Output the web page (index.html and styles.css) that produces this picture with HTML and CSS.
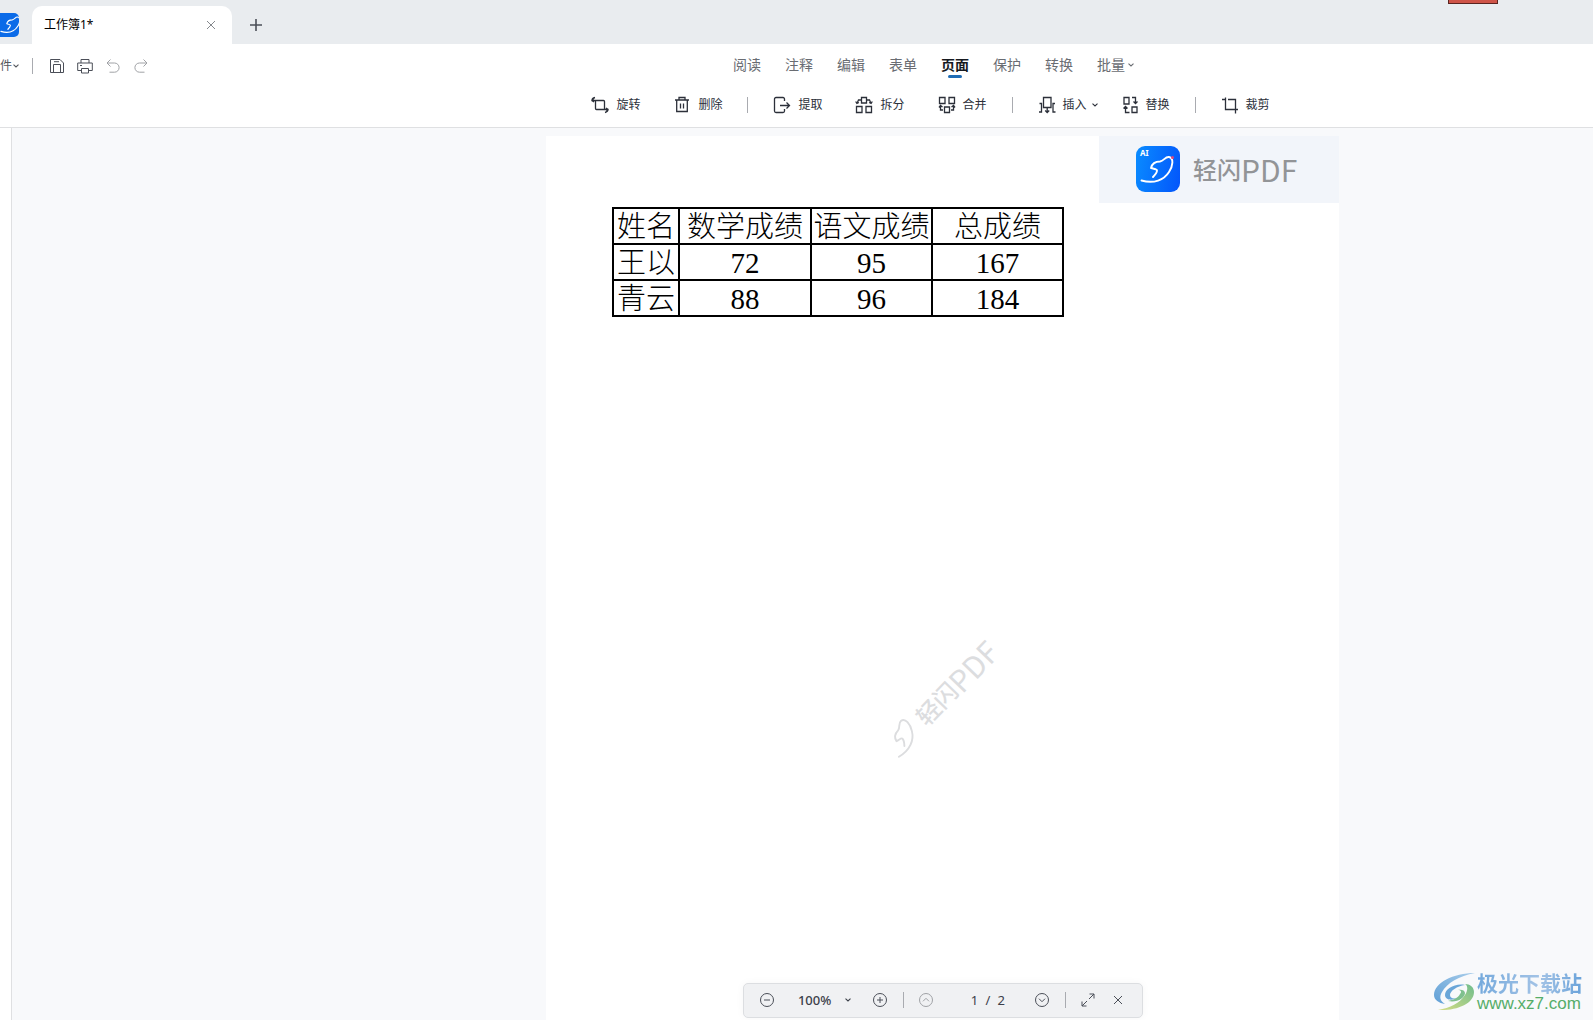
FILE: index.html
```html
<!DOCTYPE html>
<html lang="zh-CN">
<head>
<meta charset="utf-8">
<title>工作簿1*</title>
<link rel="stylesheet" href="styles.css">
</head>
<body>
<svg class="defs" aria-hidden="true">
  <symbol id="bird" viewBox="0 0 36 30">
    <path d="M1.500 25.500C14 29 24 25 29 17C33 11 34 3 29 2C25 1.500 24 6 20 6.500C14 6.500 12 9 11 13C14 14 17 14 17 15.500C17 18 15 20 13 22" fill="none" stroke="currentColor" stroke-width="1.900" stroke-linecap="round" stroke-linejoin="round"/>
  </symbol>
  <symbol id="chev" viewBox="0 0 8 8">
    <path d="M1.500 2.700l2.500 2.300l2.500-2.300" fill="none" stroke="currentColor" stroke-width="1.100"/>
  </symbol>
</svg>

<header class="titlebar">
  <div class="app-icon"><svg width="22" height="20"><use href="#bird"/></svg></div>
  <div class="doc-tab">
    <span>工作簿1*</span>
    <button class="icon-btn tab-close" aria-label="关闭标签"><svg width="12" height="12" viewBox="0 0 12 12"><path d="M2 2l8 8M10 2l-8 8"/></svg></button>
  </div>
  <button class="icon-btn new-tab" aria-label="新建标签"><svg width="14" height="14" viewBox="0 0 14 14"><path d="M7 1v12M1 7h12"/></svg></button>
  <div class="red-chip"></div>
</header>

<div class="ribbon">
  <div class="menu-row">
    <div class="quick">
      <button class="file-btn"><span>件</span><svg width="8" height="8"><use href="#chev"/></svg></button>
      <i class="sep"></i>
      <button class="icon-btn" aria-label="保存"><svg width="16" height="16" viewBox="0 0 16 16"><path d="M1.500 1.500h9.500l3.500 3.500v9.500h-13zM4.500 14v-7.500h7v7.500M5 3.700h5"/></svg></button>
      <button class="icon-btn" aria-label="打印"><svg width="16" height="16" viewBox="0 0 16 16"><path d="M4 5v-3.500h8v3.500M4 12.500h-3.300v-7.500h14.600v7.500h-3.300M4.500 10.500h7v4.500h-7zM3 7.500h2"/></svg></button>
      <button class="icon-btn faint" aria-label="撤销"><svg width="16" height="16" viewBox="0 0 16 16"><path d="M5.500 1.500l-3.500 3.500l3.500 3.500M2 5h7.500a4.600 4.600 0 0 1 0 9.200h-5"/></svg></button>
      <button class="icon-btn faint" aria-label="重做"><svg width="16" height="16" viewBox="0 0 16 16"><path d="M10.500 1.500l3.500 3.500l-3.500 3.500M14 5h-7.500a4.600 4.600 0 0 0 0 9.200h5"/></svg></button>
    </div>
    <nav class="menu">
      <button>阅读</button>
      <button>注释</button>
      <button>编辑</button>
      <button>表单</button>
      <button class="active" aria-current="page">页面</button>
      <button>保护</button>
      <button>转换</button>
      <button>批量<svg width="8" height="8"><use href="#chev"/></svg></button>
    </nav>
  </div>

  <div class="tools">
    <button><svg width="18" height="18" viewBox="0 0 18 18"><path d="M4.500 4.500h8a1 1 0 0 1 1 1v8h-8a1 1 0 0 1-1-1zM4.500 4.500h-3.500c0-1.500 1-2.500 3-3M13.500 13.500h3.500c0 1.500-1 2.500-3 3M2.500 2.500l-1.500 2l2 1.500M15.500 15.500l1.500-2l-2-1.500"/></svg>旋转</button>
    <button><svg width="18" height="18" viewBox="0 0 18 18"><path d="M2 4h14M6 4v-2.500h6v2.500M3.700 4v11.500h10.600v-11.500M7.500 7.500v5M10.500 7.500v5"/></svg>删除</button>
    <i class="sep"></i>
    <button><svg width="18" height="18" viewBox="0 0 18 18"><path d="M11.500 5v-2a1.500 1.500 0 0 0-1.500-1.500h-7a1.500 1.500 0 0 0-1.500 1.500v12a1.500 1.500 0 0 0 1.500 1.500h7a1.500 1.500 0 0 0 1.500-1.500v-2M7 9.500h9.500M13.500 6.500l3 3l-3 3"/></svg>提取</button>
    <button><svg width="18" height="18" viewBox="0 0 18 18"><path d="M6.500 1.500h5v5.500h-5zM1.500 10.500h5.500v6h-5.500zM11 10.500h5.500v6h-5.500zM6 4h-2.500l-1.500 3.500M.7 5.500l1.200 2l2-1M12 4h2.500l1.500 3.500M17.300 5.500l-1.200 2l-2-1"/></svg>拆分</button>
    <button><svg width="18" height="18" viewBox="0 0 18 18"><path d="M1.500 1.500h5.500v6h-5.500zM11 1.500h5.500v6h-5.500zM6.500 11h5v5.500h-5zM2.500 9.500v4.500h2.500M1 11.500l1.500-2l2 1.500M15.500 9.500v4.500h-2.500M17 11.500l-1.500-2l-2 1.500"/></svg>合并</button>
    <i class="sep"></i>
    <button><svg width="18" height="18" viewBox="0 0 18 18"><path d="M5.500 1.500h7.500v10h-7.500zM9.200 11.500v5M7.200 14.500l2 2l2-2M1.500 7.500h2v8.500h-2.500M17 7.500h-2v8.500h2.500"/></svg>插入<svg class="drop" width="8" height="8"><use href="#chev"/></svg></button>
    <button><svg width="18" height="18" viewBox="0 0 18 18"><path d="M3 1.500h5v6.500h-5zM11 11h5v5.500h-5zM11 1.500h3.500v6M12.500 5.500l2 2l2-2M8.500 16.500h-4v-6M2.500 12.500l2-2l2 2"/></svg>替换</button>
    <i class="sep"></i>
    <button><svg width="18" height="18" viewBox="0 0 18 18"><path d="M1 3.500h3.500M4.500 1.500v12h12.500M7 3.500h7.500v14"/></svg>裁剪</button>
  </div>
</div>

<main class="workspace">
  <aside class="rail"></aside>
  <section class="canvas">
    <article class="sheet">
      <div class="brand">
        <div class="brand-icon"><b>AI</b><svg width="36" height="30"><use href="#bird"/></svg><i></i></div>
        <div class="brand-name">轻闪<span>PDF</span></div>
      </div>
      <table class="grades">
        <colgroup><col class="c-name"><col class="c-math"><col class="c-lang"><col class="c-total"></colgroup>
        <tr><th>姓名</th><th>数学成绩</th><th>语文成绩</th><th>总成绩</th></tr>
        <tr><td>王以</td><td>72</td><td>95</td><td>167</td></tr>
        <tr><td>青云</td><td>88</td><td>96</td><td>184</td></tr>
      </table>
      <div class="watermark">
        <svg width="36" height="30"><use href="#bird"/></svg>
        <div class="brand-name">轻闪<span>PDF</span></div>
      </div>
    </article>
  </section>

  <div class="dock">
    <div class="pager">
      <button class="icon-btn" aria-label="缩小"><svg width="16" height="16" viewBox="0 0 16 16"><circle cx="8" cy="8" r="6.500"/><path d="M5 8h6"/></svg></button>
      <div class="zoom">
        <select aria-label="缩放"><option>100%</option><option>150%</option></select>
        <svg width="8" height="8"><use href="#chev"/></svg>
      </div>
      <button class="icon-btn" aria-label="放大"><svg width="16" height="16" viewBox="0 0 16 16"><circle cx="8" cy="8" r="6.500"/><path d="M5 8h6M8 5v6"/></svg></button>
      <i class="sep"></i>
      <button class="icon-btn faint" aria-label="上一页"><svg width="16" height="16" viewBox="0 0 16 16"><circle cx="8" cy="8" r="6.500"/><path d="M5 9.300l3-3l3 3"/></svg></button>
      <div class="count"><input type="text" value="1" aria-label="页码"><span>/</span><span>2</span></div>
      <button class="icon-btn" aria-label="下一页"><svg width="16" height="16" viewBox="0 0 16 16"><circle cx="8" cy="8" r="6.500"/><path d="M5 6.700l3 3l3-3"/></svg></button>
      <i class="sep"></i>
      <button class="icon-btn" aria-label="全屏"><svg width="16" height="16" viewBox="0 0 16 16"><path d="M9 7l5-5M9.500 2h4.500v4.500M7 9l-5 5M2 9.500v4.500h4.500"/></svg></button>
      <button class="icon-btn" aria-label="关闭"><svg width="16" height="16" viewBox="0 0 16 16"><path d="M4 4l8 8M12 4l-8 8"/></svg></button>
    </div>
  </div>

  <div class="site-mark">
    <svg width="44" height="40" viewBox="0 0 44 40">
      <defs>
        <linearGradient id="blue" x1="1" y1="0" x2="0" y2="1"><stop offset="0" stop-color="#a9cdea"/><stop offset="1" stop-color="#5f9fd6"/></linearGradient>
        <linearGradient id="green" x1="0" y1="1" x2="1" y2="0"><stop offset="0" stop-color="#d6dd84"/><stop offset="1" stop-color="#6fbd8d"/></linearGradient>
      </defs>
      <path d="M42 1C20 1 1 11 1 23c0 5 5 8 11 9c-5-3-6-7-3-12C14 11 26 4 42 1z" fill="url(#blue)"/>
      <path d="M32 13c-10-2-20 4-20 10c0 5 7 6 12 3c-4 1-7 0-7-3c0-4 7-9 15-10z" fill="#6aa6d8"/>
      <path d="M5 38c18 1 36-6 36-18c0-5-4-8-9-8c3 2 3 6 0 11c-5 8-15 13-27 15z" fill="url(#green)"/>
      <path d="M15 29c9 2 17-3 17-8c0-3-4-4-7-3c3 0 4 2 2 4c-2 4-7 6-12 7z" fill="#7fc08e"/>
    </svg>
    <div><p class="site-name">极光下载站</p><p class="site-url">www.xz7.com</p></div>
  </div>
</main>
</body>
</html>
```

FILE: styles.css
```css
* { box-sizing: border-box; }

body {
  margin: 0;
  height: 100vh;
  display: flex;
  flex-direction: column;
  overflow: hidden;
  background: #fff;
  color: #1f2430;
  font: 12px/16px "Noto Sans", "Noto Sans CJK SC", sans-serif;
}

button, input, select {
  margin: 0;
  padding: 0;
  border: 0;
  background: none;
  color: inherit;
  font: inherit;
}

button { display: flex; align-items: center; white-space: nowrap; }
svg { display: block; flex: none; }
button path, button circle { fill: none; stroke: currentColor; }
p { margin: 0; }
.defs { position: absolute; width: 0; height: 0; }

.sep { width: 1px; height: 16px; background: #a9abb0; }
.icon-btn { justify-content: center; color: #4b4f58; }
.icon-btn.faint { color: #a0a2a6; }

/* Title bar */
.titlebar {
  position: relative;
  flex: none;
  display: flex;
  align-items: center;
  height: 44px;
  padding-top: 6px;
  background: #e9ecef;
}
.app-icon {
  display: grid;
  place-items: center end;
  width: 19px;
  height: 24px;
  overflow: hidden;
  border-radius: 0 5px 5px 0;
  background: #0b6be8;
  color: #fff;
}
.doc-tab {
  display: flex;
  align-items: center;
  justify-content: space-between;
  width: 200px;
  height: 38px;
  margin: 0 17px 0 13px;
  padding: 0 15px 0 12px;
  border-radius: 10px 10px 0 0;
  background: #fff;
  color: #000;
}
.tab-close { color: #85888d; }
.new-tab path { stroke-width: 1.600; }
.red-chip {
  position: absolute;
  top: 0;
  right: 95px;
  width: 50px;
  height: 4px;
  border: solid #5a2420;
  border-width: 0 1px 1px;
  background: #cf5448;
}

/* Ribbon */
.ribbon { flex: none; border-bottom: 1px solid #dfe0e2; }
.menu-row { display: grid; height: 44px; padding-top: 4px; }
.quick, .menu { grid-area: 1 / 1; display: flex; align-items: center; height: 34px; }
.quick { justify-self: start; gap: 12px; height: 36px; }
.quick .sep { margin-right: 4px; }
.file-btn { color: #55585e; }
.menu { justify-self: center; gap: 24px; margin-left: 275px; font-size: 14px; color: #696c72; }
.menu button { height: 24px; gap: 2px; }
.menu .active {
  position: relative;
  color: #16191f;
  font-weight: 700;
}
.menu .active::after {
  content: "";
  position: absolute;
  left: 7px;
  bottom: -1px;
  width: 14px;
  height: 3px;
  border-radius: 2px;
  background: #1f6cb5;
}
.tools {
  display: flex;
  align-items: center;
  justify-content: center;
  gap: 17px;
  height: 39px;
  margin-left: 268px;
  padding-bottom: 5px;
}
.tools button { gap: 7px; padding: 0 8px; color: #2c303a; }
.tools path { stroke-width: 1.300; }
.tools .drop { margin: 0 -11px 0 -3px; }

/* Workspace */
.workspace { position: relative; flex: 1; display: flex; min-height: 0; background: #f8f9fb; }
.rail { width: 12px; border-right: 1px solid #dfe0e2; background: #fff; }
.canvas { flex: 1; display: flex; justify-content: center; padding: 8px 0 0 280px; }
.sheet { position: relative; width: 793px; background: #fff; }

.brand {
  display: flex;
  align-items: center;
  gap: 13px;
  width: 240px;
  height: 67px;
  margin-left: auto;
  padding: 0 0 2px 37px;
  background: #f2f5fa;
}
.brand-icon {
  position: relative;
  display: grid;
  place-items: end center;
  width: 44px;
  height: 46px;
  padding-bottom: 7px;
  border-radius: 9px;
  background: linear-gradient(100deg, #0a8cff, #0355fb);
  color: #fff;
}
.brand-icon b { position: absolute; left: 4px; top: 2px; font-size: 8px; line-height: 10px; }
.brand-icon i { position: absolute; right: 6px; top: 10px; width: 3px; height: 3px; border-radius: 2px; background: #e0457a; }
.brand-name {
  display: flex;
  align-items: center;
  font: 500 24px/32px "Noto Sans CJK SC", sans-serif;
  color: #929497;
}
.brand-name span { font-size: 30px; font-weight: 400; line-height: 30px; }

.grades {
  width: 452px;
  margin: 4px 0 0 66px;
  border-collapse: collapse;
  table-layout: fixed;
  color: #000;
  font: 29px/32px "Liberation Serif", "Noto Sans CJK SC", serif;
}
.grades th, .grades td {
  height: 36px;
  padding: 2px 0 0;
  border: 2px solid #000;
  font-weight: 300;
  text-align: center;
  white-space: nowrap;
}
.c-name { width: 66px; }
.c-math { width: 132px; }
.c-lang { width: 121px; }
.c-total { width: 131px; }

.watermark {
  position: absolute;
  left: 322px;
  top: 546px;
  display: flex;
  align-items: center;
  gap: 6px;
  color: #dcdddf;
  transform: rotate(-46deg);
}
.watermark .brand-name { color: inherit; }

/* Floating page controls */
.dock {
  position: absolute;
  left: 292px;
  right: 0;
  bottom: 2px;
  display: flex;
  justify-content: center;
  pointer-events: none;
}
.pager {
  display: flex;
  align-items: center;
  justify-content: space-between;
  width: 400px;
  height: 35px;
  padding: 0 15px 1px;
  border: 1px solid #dcdee1;
  border-radius: 5px;
  background: #f0f1f3;
  box-shadow: 0 0 8px #0000000a;
  color: #3c404a;
  font-size: 13px;
  pointer-events: auto;
}
.zoom { display: flex; align-items: center; gap: 10px; padding: 0 6px 0 9px; }
.zoom select { width: 36px; appearance: none; font-weight: 500; }
.count { display: flex; gap: 7px; padding: 0 15px 0 22px; }
.count input { width: 8px; text-align: center; }

/* Site mark */
.site-mark {
  position: absolute;
  right: 11px;
  bottom: 6px;
  display: flex;
  align-items: center;
}
.site-name {
  font: 700 21px/24px "Noto Sans CJK SC", sans-serif;
  color: transparent;
  background: linear-gradient(90deg, #74a9dc, #a3c3e6 60%, #6aa3da);
  background-clip: text;
}
.site-url { font: 17px/20px "Liberation Sans", sans-serif; color: #55ad69; }
```
